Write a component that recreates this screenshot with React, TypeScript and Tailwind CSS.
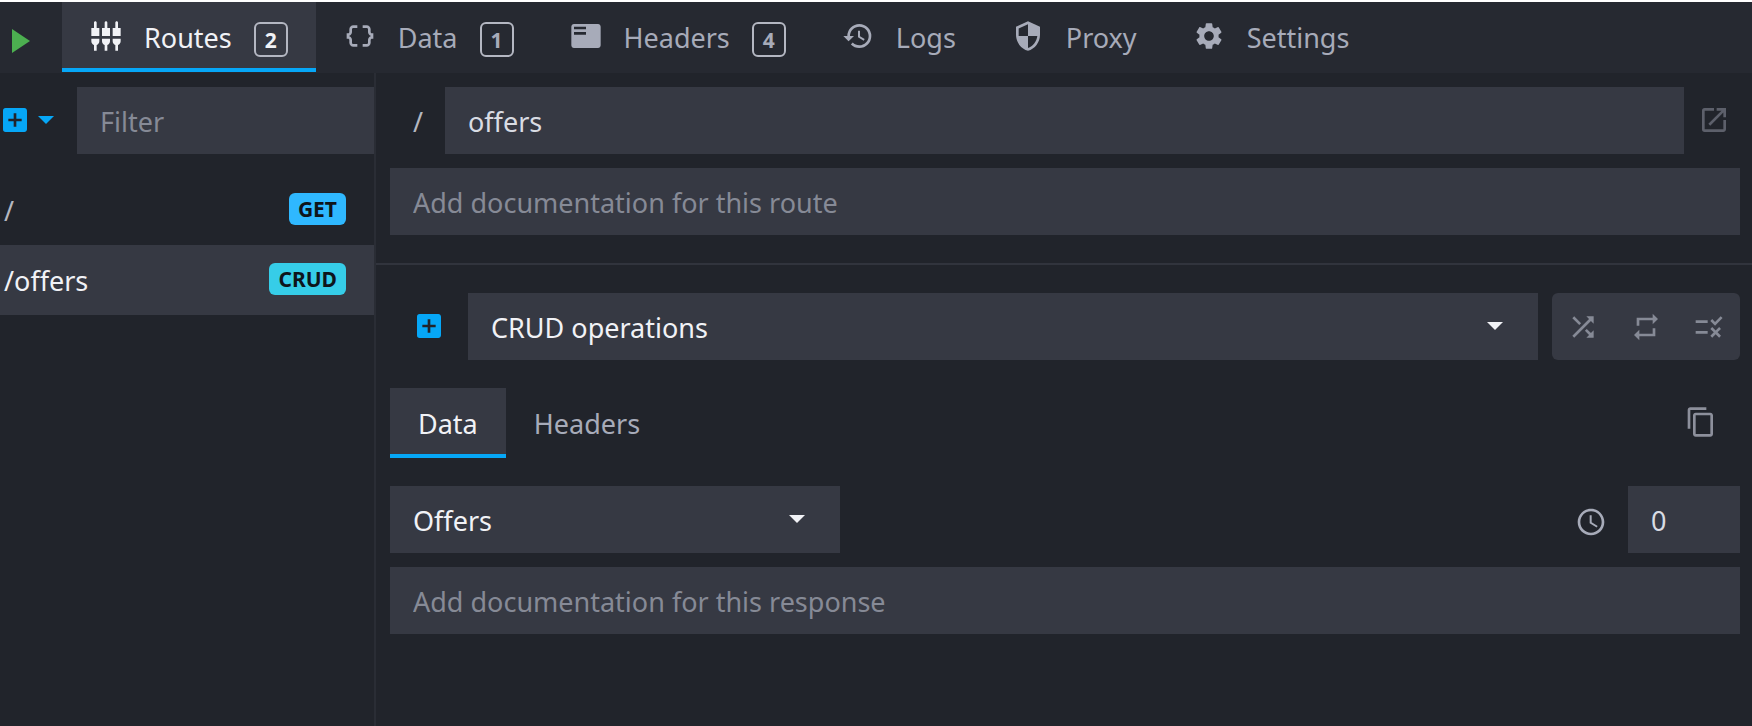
import type { ReactNode } from "react";
import type { IconType } from "react-icons";
import {
  MdAccessTime,
  MdAddBox,
  MdContentCopy,
  MdDataObject,
  MdFeaturedPlayList,
  MdHistory,
  MdOpenInNew,
  MdRepeat,
  MdRule,
  MdSecurity,
  MdSettings,
  MdSettingsInputComponent,
  MdShuffle,
} from "react-icons/md";

const field =
  "h-[67px] min-w-0 rounded-none bg-[#363943] px-[23px] pt-0.5 text-[#d9dce3] outline-none placeholder:text-[#868a96] placeholder:opacity-100";

function Caret({ className }: { className: string }) {
  return (
    <svg viewBox="0 0 16 8" className={`h-2 w-4 fill-current ${className}`} aria-hidden="true">
      <path d="M0 0h16L8 8z" />
    </svg>
  );
}

function NavTab({
  icon: Icon,
  label,
  count,
  active = false,
}: {
  icon: IconType;
  label: string;
  count?: number;
  active?: boolean;
}) {
  return (
    <button
      type="button"
      className={`flex h-[70px] items-center gap-[22px] border-b-4 px-7 pt-1.5 ${
        active
          ? "border-[#06a7f7] bg-[#363943] text-[#f1f2f6]"
          : "border-transparent text-[#a7abb9]"
      }`}
    >
      <Icon className="mb-1 size-8" />
      <span>{label}</span>
      {count !== undefined && (
        <span className="mt-0.5 flex h-[35px] w-[34px] items-center justify-center rounded-md border-2 border-[#b4b7c2] pt-0.5 text-[21px] font-bold">
          {count}
        </span>
      )}
    </button>
  );
}

function RouteItem({
  path,
  method,
  badge,
  active = false,
}: {
  path: string;
  method: string;
  badge: string;
  active?: boolean;
}) {
  return (
    <li>
      <button
        type="button"
        className={`flex h-[70px] w-full items-center justify-between pt-0.5 pr-7 pl-1 ${
          active ? "bg-[#363943] text-[#f1f2f6]" : "text-[#b4b7c0]"
        }`}
      >
        <span>{path}</span>
        <span
          className={`mb-1 flex h-8 items-center rounded-md px-[9px] text-[21px] font-bold text-[#0e151b] ${badge}`}
        >
          {method}
        </span>
      </button>
    </li>
  );
}

function SelectBox({
  label,
  value,
  className,
}: {
  label: string;
  value: string;
  className: string;
}) {
  return (
    <div className={`relative ${className}`}>
      <select
        aria-label={label}
        defaultValue={value}
        className="h-[67px] w-full appearance-none rounded-none bg-[#363943] pt-[3px] pr-16 pl-[23px] text-[#f1f2f6] outline-none"
      >
        <option>{value}</option>
      </select>
      <Caret className="pointer-events-none absolute top-[29px] right-[35px] text-[#f1f2f6]" />
    </div>
  );
}

function IconButton({
  label,
  className = "",
  children,
}: {
  label: string;
  className?: string;
  children: ReactNode;
}) {
  return (
    <button
      type="button"
      aria-label={label}
      className={`flex items-center justify-center ${className}`}
    >
      {children}
    </button>
  );
}

export default function App() {
  return (
    <div className="flex min-h-screen flex-col overflow-hidden border-t-2 border-white bg-[#21242b] font-['Noto_Sans','Open_Sans',sans-serif] text-[27px] leading-9 text-[#a7abb9]">
      <nav className="flex h-[71px] shrink-0 items-start bg-[#262931]">
        <IconButton label="Start server" className="h-[71px] w-[62px] pt-1.5 pr-5">
          <svg viewBox="0 0 18 24" className="h-6 w-[18px] fill-[#4caf50]" aria-hidden="true">
            <path d="M0 0l18 12L0 24z" />
          </svg>
        </IconButton>
        <NavTab icon={MdSettingsInputComponent} label="Routes" count={2} active />
        <NavTab icon={MdDataObject} label="Data" count={1} />
        <NavTab icon={MdFeaturedPlayList} label="Headers" count={4} />
        <NavTab icon={MdHistory} label="Logs" />
        <NavTab icon={MdSecurity} label="Proxy" />
        <NavTab icon={MdSettings} label="Settings" />
      </nav>

      <div className="flex flex-1">
        <aside className="w-[376px] shrink-0 border-r-2 border-[#2a2d35] pt-[14px]">
          <div className="flex items-center">
            <IconButton
              label="Add route"
              className="w-[77px] shrink-0 gap-[7px] pr-6 pb-0.5 text-[#06a7f7]"
            >
              <MdAddBox className="size-8 shrink-0" />
              <Caret className="shrink-0" />
            </IconButton>
            <input
              type="text"
              aria-label="Filter"
              placeholder="Filter"
              className={`${field} flex-1`}
            />
          </div>
          <ul className="mt-[21px]">
            <RouteItem path="/" method="GET" badge="bg-[#2fb8ff]" />
            <RouteItem path="/offers" method="CRUD" badge="bg-[#36cde8]" active />
          </ul>
        </aside>

        <main className="min-w-0 flex-1">
          <section className="flex flex-col gap-[14px] border-b-2 border-[#31343d] pt-[14px] pr-3 pb-7 pl-[14px]">
            <div className="flex items-center">
              <label htmlFor="path" className="w-[55px] shrink-0 pt-[3px] pl-[23px] text-[#b4b7c0]">
                /
              </label>
              <input
                id="path"
                type="text"
                defaultValue="offers"
                className={`${field} flex-1`}
              />
              <IconButton label="Open in browser" className="w-14 pb-0.5 pl-1 text-[#5d606b]">
                <MdOpenInNew className="size-8" />
              </IconButton>
            </div>
            <input
              type="text"
              aria-label="Route documentation"
              placeholder="Add documentation for this route"
              className={`${field} w-full`}
            />
          </section>

          <section className="pt-7 pr-3 pl-[14px]">
            <div className="flex items-center">
              <IconButton label="Add response" className="w-[78px] pb-0.5 text-[#06a7f7]">
                <MdAddBox className="size-8" />
              </IconButton>
              <SelectBox label="Response" value="CRUD operations" className="min-w-0 flex-1" />
              <div className="ml-[14px] grid h-[67px] w-[188px] grid-cols-3 rounded-md bg-[#363943] text-[#868a96]">
                <IconButton label="Random response">
                  <MdShuffle className="size-8" />
                </IconButton>
                <IconButton label="Sequential response">
                  <MdRepeat className="size-8" />
                </IconButton>
                <IconButton label="Disable rules">
                  <MdRule className="size-8" />
                </IconButton>
              </div>
            </div>

            <div className="mt-7 flex items-center">
              <button
                type="button"
                className="h-[70px] border-b-4 border-[#06a7f7] bg-[#363943] px-7 pt-1.5 text-[#f1f2f6]"
              >
                Data
              </button>
              <button type="button" className="h-[70px] border-b-4 border-transparent px-7 pt-1.5">
                Headers
              </button>
              <IconButton
                label="Duplicate response"
                className="mr-[23px] ml-auto pb-0.5 text-[#8d909c]"
              >
                <MdContentCopy className="size-8" />
              </IconButton>
            </div>

            <div className="mt-7 flex items-center">
              <SelectBox label="Data bucket" value="Offers" className="w-1/3" />
              <label htmlFor="latency" className="mt-1 mr-[21px] ml-auto">
                <MdAccessTime className="size-8" title="Latency" />
              </label>
              <input
                id="latency"
                type="text"
                inputMode="numeric"
                defaultValue="0"
                className={`${field} w-28`}
              />
            </div>
            <input
              type="text"
              aria-label="Response documentation"
              placeholder="Add documentation for this response"
              className={`${field} mt-[14px] w-full`}
            />
          </section>
        </main>
      </div>
    </div>
  );
}
